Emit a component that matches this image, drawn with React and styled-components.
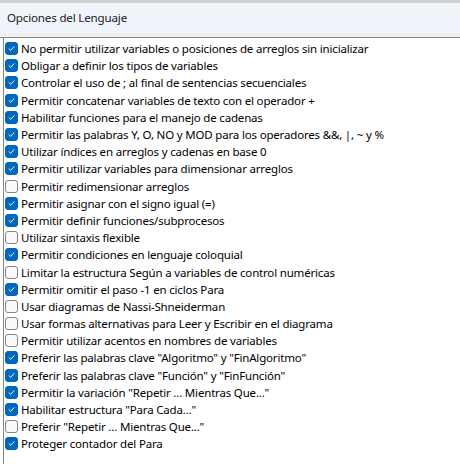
import styled, { createGlobalStyle } from "styled-components";

const GlobalStyle = createGlobalStyle`
  html, body {
    margin: 0;
    padding: 0;
    background: #ffffff;
  }
  body {
    font-family: "Noto Sans", "DejaVu Sans", sans-serif;
    font-size: 11.5px;
    letter-spacing: -0.18px;
    color: #000000;
  }
`;

const options = [
  ["No permitir utilizar variables o posiciones de arreglos sin inicializar", true],
  ["Obligar a definir los tipos de variables", true],
  ["Controlar el uso de ; al final de sentencias secuenciales", true],
  ["Permitir concatenar variables de texto con el operador +", true],
  ["Habilitar funciones para el manejo de cadenas", true],
  ["Permitir las palabras Y, O, NO y MOD para los operadores &&, |, ~ y %", true],
  ["Utilizar índices en arreglos y cadenas en base 0", true],
  ["Permitir utilizar variables para dimensionar arreglos", true],
  ["Permitir redimensionar arreglos", false],
  ["Permitir asignar con el signo igual (=)", true],
  ["Permitir definir funciones/subprocesos", true],
  ["Utilizar sintaxis flexible", false],
  ["Permitir condiciones en lenguaje coloquial", true],
  ["Limitar la estructura Según a variables de control numéricas", false],
  ["Permitir omitir el paso -1 en ciclos Para", true],
  ["Usar diagramas de Nassi-Shneiderman", false],
  ["Usar formas alternativas para Leer y Escribir en el diagrama", false],
  ["Permitir utilizar acentos en nombres de variables", false],
  ["Preferir las palabras clave \"Algoritmo\" y \"FinAlgoritmo\"", true],
  ["Preferir las palabras clave \"Función\" y \"FinFunción\"", true],
  ["Permitir la variación \"Repetir ... Mientras Que...\"", true],
  ["Habilitar estructura \"Para Cada...\"", true],
  ["Preferir \"Repetir ... Mientras Que...\"", false],
  ["Proteger contador del Para", true],
];

const Check = ({ checked }) => (
  <Box $checked={checked}>
    {checked ? (
      <svg width="9" height="9" viewBox="0 0 9 9">
        <path d="M2 4.7 L3.7 6.3 L7 2.8" fill="none" stroke="#ffffff" strokeWidth="1" strokeLinecap="round" strokeLinejoin="round" />
      </svg>
    ) : null}
  </Box>
);

const App = () => {
  return (
    <>
      <GlobalStyle />
      <Window>
        <TitleBar>Opciones del Lenguaje</TitleBar>
        <Strip />
        <List>
          {options.map(([label, checked]) => (
            <Row key={label}>
              <Check checked={checked} />
              <Label>{label}</Label>
            </Row>
          ))}
        </List>
      </Window>
    </>
  );
};

export default App;

const Window = styled.div`
  width: 460px;
  height: 464px;
  display: flex;
  flex-direction: column;
  border-top: 3px solid #cfcfcf;
  box-sizing: border-box;
  overflow: hidden;
`;

const TitleBar = styled.div`
  height: 30px;
  display: flex;
  align-items: center;
  padding-left: 7px;
  padding-bottom: 2px;
  box-sizing: border-box;
  background: #eff3fa;
  font-size: 11.6px;
  color: #1a1a1a;
`;

const Strip = styled.div`
  height: 4px;
  background: #f0f0f0;
  border-bottom: 1px solid #828790;
`;

const List = styled.div`
  flex: 1;
  margin-left: 3px;
  border-left: 1px solid #828790;
  background: #ffffff;
  padding-top: 2px;
  display: flex;
  flex-direction: column;
`;

const Row = styled.div`
  height: 17.2px;
  display: flex;
  align-items: center;
  gap: 3px;
  padding-left: 1px;
  white-space: nowrap;
`;

const Box = styled.span`
  width: 13px;
  height: 13px;
  box-sizing: border-box;
  border-radius: 3px;
  flex-shrink: 0;
  display: flex;
  align-items: center;
  justify-content: center;
  background: ${(p) => (p.$checked ? "#0067c0" : "#f9f9f9")};
  border: 1px solid ${(p) => (p.$checked ? "#0067c0" : "#858585")};
`;

const Label = styled.span`
  line-height: 17px;
  color: #000000;
`;
